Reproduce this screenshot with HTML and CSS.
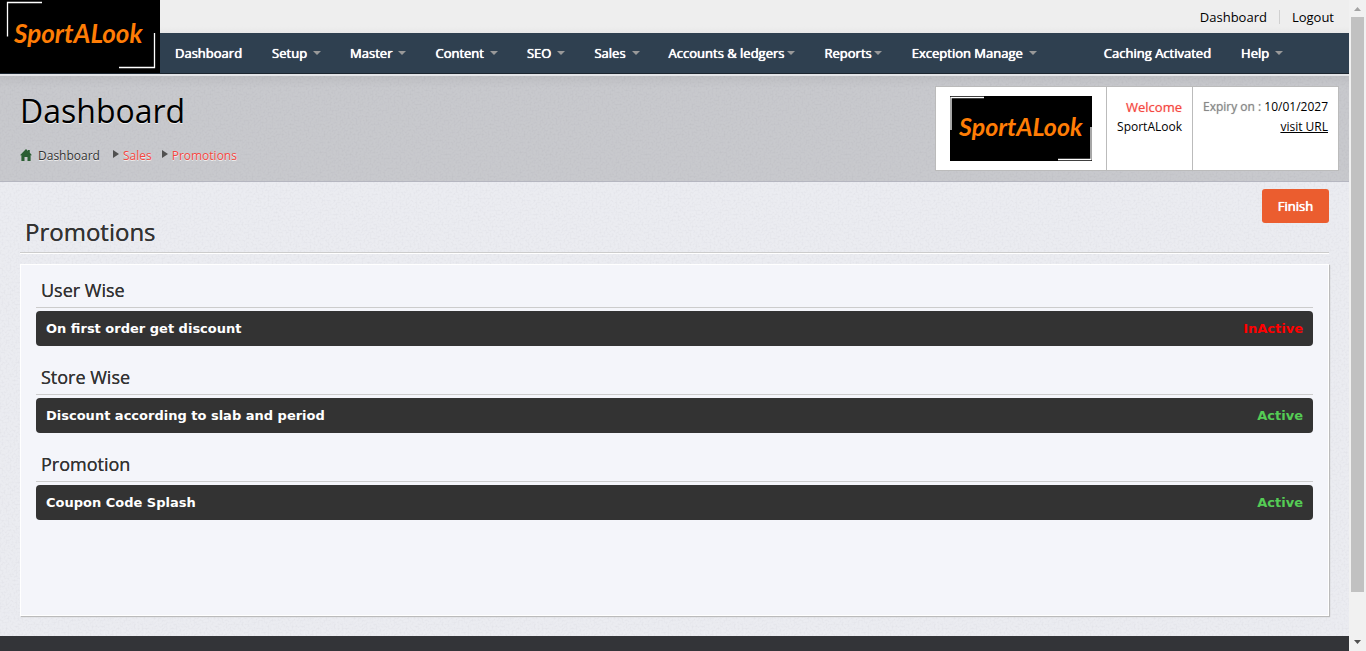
FILE: index.html
```html
<!DOCTYPE html>
<html lang="en">
<head>
<meta charset="utf-8">
<title>Promotions</title>
<link rel="stylesheet" href="styles.css">
</head>
<body>
<div class="page">
  <header class="masthead">
    <a class="logo" href="#">
      <svg class="brand" viewBox="0 0 160 73" role="img" aria-label="SportALook">
        <rect width="160" height="73" fill="#000"/>
        <path d="M7.500 36.500V2.500H42M119 67.500H154.500V33" fill="none" stroke="#fff" stroke-width="1.300"/>
        <text class="brand-text" x="14" y="43">SportALook</text>
      </svg>
    </a>
    <div class="topbar">
      <a href="#">Dashboard</a>
      <a class="divided" href="#">Logout</a>
    </div>
    <nav class="nav">
      <a href="#">Dashboard</a>
      <a class="caret" href="#">Setup</a>
      <a class="caret" href="#">Master</a>
      <a class="caret" href="#">Content</a>
      <a class="caret" href="#">SEO</a>
      <a class="caret" href="#">Sales</a>
      <a class="caret tight" href="#">Accounts &amp; ledgers</a>
      <a class="caret tight" href="#">Reports</a>
      <a class="caret" href="#">Exception Manage</a>
      <a class="group" href="#">Caching Activated</a>
      <a class="caret" href="#">Help</a>
    </nav>
  </header>

  <section class="hero">
    <div>
      <h1>Dashboard</h1>
      <div class="crumbs">
        <svg class="home" viewBox="0 0 12 12" aria-hidden="true"><path d="M6 0L8 2V1H9.800V3.800L12 6.200H10.600V12H7.500V8H4.500V12H1.400V6.200H0Z" fill="#2b5e33"/></svg>
        <span>Dashboard</span>
        <a href="#">Sales</a>
        <a href="#">Promotions</a>
      </div>
    </div>
    <div class="account">
      <div class="cell">
        <svg class="brand-small" viewBox="0 0 142 65" role="img" aria-label="SportALook">
          <rect width="142" height="65" fill="#000"/>
          <path d="M1 34V1.500H34M108 63.500H141V31" fill="none" stroke="#fff" stroke-width="1.300"/>
          <text class="brand-text" x="9" y="40">SportALook</text>
        </svg>
      </div>
      <div class="cell user"><strong>Welcome</strong><span>SportALook</span></div>
      <div class="cell expiry"><span><b>Expiry on :</b> 10/01/2027</span><a href="#">visit URL</a></div>
    </div>
  </section>

  <main class="content">
    <div class="actions"><button type="button" class="finish">Finish</button></div>
    <h2>Promotions</h2>
    <div class="panel">
      <section>
        <h3>User Wise</h3>
        <div class="promo"><span>On first order get discount</span><span class="off">InActive</span></div>
      </section>
      <section>
        <h3>Store Wise</h3>
        <div class="promo"><span>Discount according to slab and period</span><span class="on">Active</span></div>
      </section>
      <section>
        <h3>Promotion</h3>
        <div class="promo"><span>Coupon Code Splash</span><span class="on">Active</span></div>
      </section>
    </div>
  </main>
  <footer class="footer"></footer>
</div>
<div class="scrollbar" aria-hidden="true">
  <svg viewBox="0 0 17 17"><path d="M5 11L8.500 7L12 11Z" fill="#a3a3a3"/></svg>
  <div class="thumb"></div>
  <svg viewBox="0 0 17 17"><path d="M5 6L8.500 10L12 6Z" fill="#505050"/></svg>
</div>
</body>
</html>
```
FILE: styles.css
```css
* { box-sizing: border-box; }
body {
  margin: 0;
  display: flex;
  font-family: "Open Sans", sans-serif;
  font-size: 13px;
  color: #000;
}
a { color: inherit; text-decoration: none; }
h1, h2, h3 { margin: 0; font-weight: 400; }

.page {
  flex: 1;
  min-width: 0;
  min-height: 100vh;
  display: flex;
  flex-direction: column;
  background: #ebecf1 url("data:image/svg+xml,%3Csvg xmlns='http://www.w3.org/2000/svg' width='200' height='200'%3E%3Cfilter id='n' x='0' y='0' width='1' height='1'%3E%3CfeTurbulence type='fractalNoise' baseFrequency='.5' numOctaves='2' stitchTiles='stitch'/%3E%3CfeColorMatrix values='0 0 0 0 .5 0 0 0 0 .5 0 0 0 0 .55 .4 0 0 0 -.16'/%3E%3C/filter%3E%3Crect width='200' height='200' filter='url(%23n)'/%3E%3C/svg%3E");
}

.masthead {
  display: grid;
  grid-template: 33px 40px / 160px 1fr;
  border-bottom: 1px solid #1c2630;
}
.logo { grid-row: 1 / 3; }
.brand { display: block; width: 160px; height: 73px; }
.brand-text {
  font-family: Lato, sans-serif;
  font-size: 26px;
  font-weight: 700;
  font-style: italic;
  fill: #ff7d05;
}
.brand-small .brand-text { font-size: 25px; }
.topbar {
  display: flex;
  justify-content: flex-end;
  align-items: center;
  gap: 12px;
  padding: 1px 15px 0 0;
  background: linear-gradient(#eee 80%, #e8e8e8);
}
.divided { border-left: 1px solid #d0d0d0; padding-left: 12px; line-height: 14px; }
.nav {
  display: flex;
  align-items: center;
  gap: 30px;
  padding: 0 15px;
  background: #2f4050;
  color: #fff;
  white-space: nowrap;
  text-shadow: 0 0 0 #fff, 0 0 1px #fff;
}
.nav a { display: flex; align-items: center; }
.caret::after {
  content: "";
  margin: 0 0 0 6px;
  border: 4px solid transparent;
  border-top-color: #999;
  border-bottom: 0;
}
.nav .caret { margin-right: -1px; }
.nav .tight { margin-right: 0; }
.tight::after { margin-left: 2px; }
.nav .group { margin-left: 38px; }

.hero {
  display: flex;
  justify-content: space-between;
  min-height: 108px;
  padding: 12px 10px 10px 20px;
  border-top: 2px solid #e3e4e7;
  border-bottom: 1px solid #b5b6c0;
  background: linear-gradient(rgba(0, 0, 0, .19), rgba(0, 0, 0, .15) 12px);
}
h1 { font-size: 32px; line-height: 46px; text-shadow: 0 1px 0 #eee; }
.crumbs {
  display: flex;
  align-items: center;
  padding-top: 13px;
  font-size: 12px;
  line-height: 18px;
  color: #333;
  text-shadow: 0 1px 0 #eee;
}
.home { width: 12px; height: 12px; margin: 0 6px 2px 0; }
.crumbs a { display: flex; align-items: center; margin-left: 10px; color: #f5463f; }
.crumbs span + a { margin-left: 13px; }
.crumbs a::before {
  content: "";
  margin: 0 4px 4px 0;
  border: 4px solid transparent;
  border-left: 6px solid #505050;
  border-right: 0;
}
.account {
  display: flex;
  align-self: flex-start;
  height: 85px;
  margin-top: -2px;
  border: 1px solid #bbb;
  background: #fff;
  font-size: 12px;
  line-height: 20px;
}
.cell { display: flex; flex-direction: column; align-items: flex-end; padding: 10px; }
.cell + .cell { border-left: 1px solid #bbb; }
.cell:first-child { padding: 9px 14px; }
.brand-small { display: block; width: 142px; height: 65px; }
.user strong { font-size: 13px; font-weight: 400; color: #f5463f; text-shadow: 0 0 1px #f9a09c; }
.expiry b { font-weight: 400; color: #888; text-shadow: 0 0 1px #aaa; }
.expiry a { text-decoration: underline; }

.content { flex: 1; display: flex; flex-direction: column; padding: 7px 20px 20px; }
.actions { display: flex; justify-content: flex-end; height: 26px; }
.finish {
  flex: none;
  width: 67px;
  height: 34px;
  padding: 0;
  border: 0;
  border-radius: 3px;
  background: #eb5d2f;
  color: #fff;
  font: 13px "Open Sans", sans-serif;
  text-shadow: 0 0 0 #fff, 0 0 1px #fff;
}
h2 {
  padding: 0 5px 3px;
  border-bottom: 1px solid #ccc;
  box-shadow: 0 1px 0 #fff;
  font-size: 24px;
  line-height: 34px;
  color: #333;
  text-shadow: 0 0 0 #333;
}
.panel {
  flex: 1;
  display: flex;
  flex-direction: column;
  gap: 16px;
  margin-top: 11px;
  padding: 10px 15px;
  border: 1px solid #fff;
  background: #f4f5fa;
  box-shadow: 1px 1px 1px #bbb;
}
h3 {
  padding: 0 5px 2px;
  margin-bottom: 3px;
  border-bottom: 1px solid #ccc;
  font-size: 18px;
  line-height: 30px;
  color: #333;
  text-shadow: 0 0 0 #333;
}
.promo {
  display: flex;
  justify-content: space-between;
  padding: 0 10px;
  border-radius: 4px;
  background: #333;
  color: #fff;
  font: bold 13px/35px Verdana, "DejaVu Sans", sans-serif;
}
.off { color: #f00; }
.on { color: #5c5; }
.footer { height: 15px; background: #333438; }

.scrollbar {
  position: sticky;
  top: 0;
  display: flex;
  flex-direction: column;
  width: 17px;
  height: 100vh;
  background: #f1f1f1;
}
.scrollbar svg { flex: none; width: 17px; height: 17px; }
.thumb { height: 575px; margin: 0 2px auto; background: #c1c1c1; }
```
